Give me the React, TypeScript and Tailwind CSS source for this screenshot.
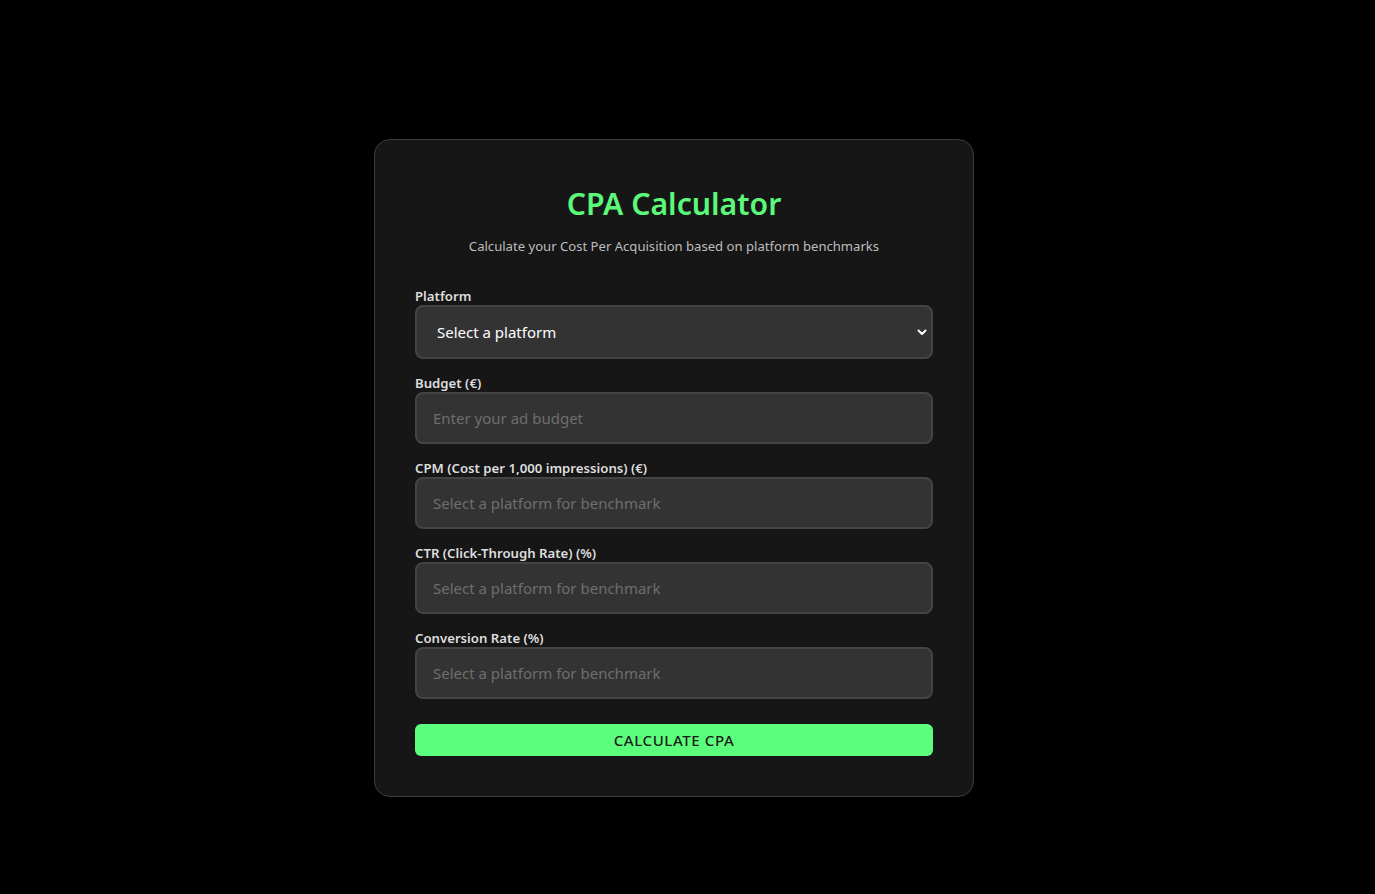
import React from 'react';

const font = { fontFamily: '"Noto Sans", "Open Sans", sans-serif' };

const fields = [
  { label: 'Budget (€)', placeholder: 'Enter your ad budget' },
  { label: 'CPM (Cost per 1,000 impressions) (€)', placeholder: 'Select a platform for benchmark' },
  { label: 'CTR (Click-Through Rate) (%)', placeholder: 'Select a platform for benchmark' },
  { label: 'Conversion Rate (%)', placeholder: 'Select a platform for benchmark' },
];

const App: React.FC = () => {
  return (
    <div className="min-h-screen bg-black flex items-start justify-center pt-[139px] pr-[27px]" style={font}>
      <div className="w-[600px] bg-[#161616] border border-[#3c3c3c] rounded-2xl px-10 pt-10 pb-10">
        {/* Header */}
        <h1 className="text-[30.2px] leading-[48px] font-semibold text-[#5cf87a] text-center">
          CPA Calculator
        </h1>
        <p className="mt-2 text-[13.1px] leading-[21px] text-[#bdbdbd] text-center">
          Calculate your Cost Per Acquisition based on platform benchmarks
        </p>

        <div className="mt-[30px] flex flex-col gap-4">
          {/* Platform select */}
          <div className="flex flex-col">
            <label className="text-[13.2px] leading-[18px] font-semibold text-[#dedede]">Platform</label>
            <div className="relative">
              <select className="w-full h-[54px] appearance-none bg-[#333333] border-2 border-[#444444] rounded-lg pl-[20px] pr-10 text-[15px] text-white outline-none">
                <option>Select a platform</option>
                <option>Facebook</option>
                <option>Google Ads</option>
                <option>Instagram</option>
                <option>LinkedIn</option>
                <option>TikTok</option>
              </select>
              <svg
                className="absolute right-[5px] top-1/2 -translate-y-1/2 pointer-events-none"
                width="12"
                height="12"
                viewBox="0 0 12 12"
                fill="none"
              >
                <path d="M2.5 4.5 L6 8 L9.5 4.5" stroke="white" strokeWidth="2" strokeLinecap="round" strokeLinejoin="round" />
              </svg>
            </div>
          </div>

          {fields.map((f) => (
            <div key={f.label} className="flex flex-col">
              <label className="text-[13.2px] leading-[17px] font-semibold text-[#dedede]">{f.label}</label>
              <input
                type="number"
                placeholder={f.placeholder}
                className="w-full h-[52px] bg-[#333333] border-2 border-[#444444] rounded-lg px-4 text-[15px] text-white placeholder:text-[#6e6e6e] outline-none"
              />
            </div>
          ))}
        </div>

        <button className="mt-[25px] w-full h-8 bg-[#5cff7c] rounded-md text-[15px] font-medium tracking-[0.6px] text-[#1a1a1a] uppercase">
          Calculate CPA
        </button>
      </div>
    </div>
  );
};

export default App;
